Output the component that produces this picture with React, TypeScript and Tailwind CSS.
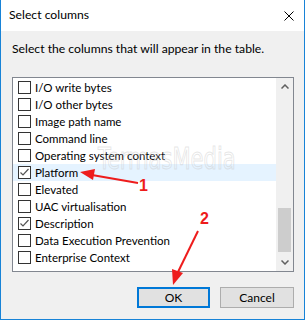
import React from "react";

const items: { label: string; checked: boolean; hl?: boolean }[] = [
  { label: "I/O write bytes", checked: false },
  { label: "I/O other bytes", checked: false },
  { label: "Image path name", checked: false },
  { label: "Command line", checked: false },
  { label: "Operating system context", checked: false },
  { label: "Platform", checked: true, hl: true },
  { label: "Elevated", checked: false },
  { label: "UAC virtualisation", checked: false },
  { label: "Description", checked: true },
  { label: "Data Execution Prevention", checked: false },
  { label: "Enterprise Context", checked: false },
];

function Box({ checked }: { checked: boolean }) {
  return (
    <div className="w-[13px] h-[13px] border border-[#333333] bg-white shrink-0 flex items-center justify-center">
      {checked && (
        <svg width="11" height="11" viewBox="0 0 11 11">
          <polyline points="1.5,5.5 4,8 9.5,2" fill="none" stroke="#555" strokeWidth="1.2" />
        </svg>
      )}
    </div>
  );
}

export default function App() {
  return (
    <div className="relative w-[307px] h-[322px] bg-white" style={{ fontFamily: 'Lato, "Noto Sans", sans-serif' }}>
      <div className="w-[305px] h-[320px] border-x border-b border-[#1883d7] flex flex-col">
        <div className="h-[31px] bg-white flex items-center justify-between pl-[8px] pr-[10px] shrink-0">
          <span className="text-[12.2px] text-black">Select columns</span>
          <svg width="10" height="10" viewBox="0 0 10 10">
            <path d="M0.5 0.5 L9.5 9.5 M9.5 0.5 L0.5 9.5" stroke="#000" strokeWidth="1" />
          </svg>
        </div>
        <div className="flex-1 bg-[#f0f0f0] flex flex-col pl-[11px] pr-[10px] pt-[10px]">
          <div className="text-[12.2px] leading-[16px] text-black">Select the columns that will appear in the table.</div>
          <div className="mt-[20px] h-[195px] border border-[#828790] bg-white flex">
            <div className="flex-1 pt-[1px] overflow-hidden">
              {items.map((it) => (
                <div
                  key={it.label}
                  className={`h-[17px] flex items-center pl-[5px] gap-[4px] ${it.hl ? "bg-[#e5f3ff]" : ""}`}
                >
                  <Box checked={it.checked} />
                  <span className="text-[11.5px] leading-[17px] text-black whitespace-nowrap">{it.label}</span>
                </div>
              ))}
            </div>
            <div className="w-[17px] bg-[#f0f0f0] flex flex-col items-center shrink-0">
              <div className="h-[17px] flex items-center justify-center">
                <svg width="8" height="5" viewBox="0 0 8 5">
                  <polyline points="0.5,4.5 4,1 7.5,4.5" fill="none" stroke="#606060" strokeWidth="1.5" />
                </svg>
              </div>
              <div className="h-[113px]" />
              <div className="w-[13px] h-[44px] bg-[#cdcdcd]" />
              <div className="flex-1" />
              <div className="h-[17px] flex items-center justify-center">
                <svg width="8" height="5" viewBox="0 0 8 5">
                  <polyline points="0.5,0.5 4,4 7.5,0.5" fill="none" stroke="#606060" strokeWidth="1.5" />
                </svg>
              </div>
            </div>
          </div>
          <div className="mt-[15px] flex justify-end gap-[10px]">
            <div className="w-[73px] h-[21px] border-2 border-[#0078d7] bg-[#e1e1e1] flex items-center justify-center text-[12px] text-black">
              OK
            </div>
            <div className="w-[74px] h-[21px] border border-[#adadad] bg-[#e1e1e1] flex items-center justify-center text-[12px] text-black">
              Cancel
            </div>
          </div>
        </div>
      </div>

      <div
        className="absolute left-[98px] top-[143px] text-[30px] leading-[32px] text-transparent pointer-events-none whitespace-nowrap"
        style={{ WebkitTextStroke: "1px rgba(200,200,200,0.45)", fontFamily: '"DejaVu Sans Condensed", "Liberation Sans", sans-serif', transform: "scaleX(0.78)", transformOrigin: "left" }}
      >
        TermasMedia
      </div>

      <svg className="absolute left-0 top-0 pointer-events-none" width="307" height="322" viewBox="0 0 307 322">
        <line x1="138" y1="183" x2="92" y2="175" stroke="#ee1c1c" strokeWidth="2" />
        <polygon points="80,172 95,169 93,180" fill="#ee1c1c" />
        <line x1="198" y1="231" x2="178" y2="272" stroke="#ee1c1c" strokeWidth="2" />
        <polygon points="173,285 172,269 183,273" fill="#ee1c1c" />
      </svg>
      <div className="absolute left-[139px] top-[177px] text-[16px] leading-[18px] font-bold text-[#ee1c1c]" style={{ fontFamily: '"Liberation Sans", sans-serif' }}>1</div>
      <div className="absolute left-[200px] top-[210px] text-[16px] leading-[18px] font-bold text-[#ee1c1c]" style={{ fontFamily: '"Liberation Sans", sans-serif' }}>2</div>
    </div>
  );
}
